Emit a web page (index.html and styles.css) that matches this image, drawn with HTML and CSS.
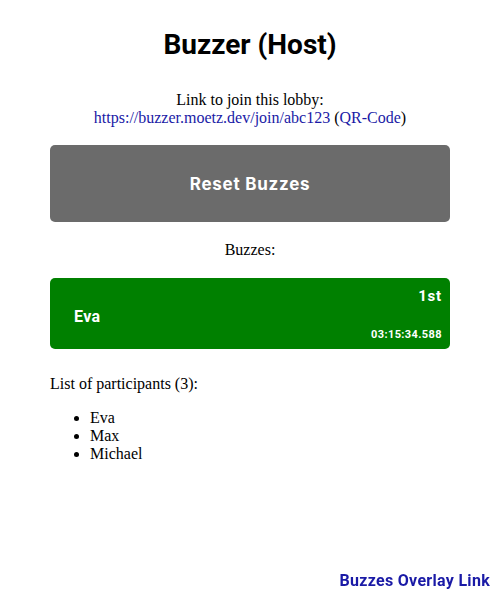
FILE: index.html
```html
<!DOCTYPE html>
<html>
<head>
<meta charset="utf-8">
<link rel="stylesheet" href="styles.css">
</head>
<body>
<div class="page">
  <h1 class="title">Buzzer (Host)</h1>
  <p class="join">Link to join this lobby:<br><a class="link" href="#">https://buzzer.moetz.dev/join/abc123</a> (<a class="link" href="#">QR-Code</a>)</p>
  <button class="reset">Reset Buzzes</button>
  <p class="label">Buzzes:</p>
  <div class="buzz">
    <span class="buzz-name">Eva</span>
    <div class="buzz-meta">
      <span class="buzz-rank">1st</span>
      <span class="buzz-time">03:15:34.588</span>
    </div>
  </div>
  <p class="participants">List of participants (3):</p>
  <ul class="plist">
    <li>Eva</li>
    <li>Max</li>
    <li>Michael</li>
  </ul>
</div>
<a class="overlay" href="#">Buzzes Overlay Link</a>
</body>
</html>
```
FILE: styles.css
```css
html, body {
  margin: 0;
  padding: 0;
}
body {
  font-family: "Liberation Serif", serif;
  font-size: 16px;
  color: #000;
  background: #fff;
}
.page {
  width: 400px;
  margin: 0 auto;
  padding-top: 29px;
}
.title {
  font-family: Roboto, sans-serif;
  font-weight: 700;
  font-size: 28px;
  line-height: 32px;
  text-align: center;
  margin: 0 0 30px;
}
.join {
  text-align: center;
  margin: 0 0 18px;
  line-height: 18px;
}
.link {
  color: #1a1aa6;
  text-decoration: none;
}
.reset {
  display: block;
  width: 400px;
  height: 77px;
  border: none;
  border-radius: 5px;
  background: #6b6b6b;
  color: #fff;
  font-family: Inter, sans-serif;
  font-weight: 700;
  font-size: 17px;
  letter-spacing: 0.75px;
  padding: 0;
  margin: 0;
}
.label {
  text-align: center;
  margin: 19px 0 19px;
  line-height: 18px;
}
.buzz {
  height: 71px;
  background: #008000;
  border-radius: 5px;
  color: #fff;
  font-family: Roboto, sans-serif;
  font-weight: 700;
  display: flex;
  justify-content: space-between;
  align-items: center;
  padding: 0 8px 0 24px;
  box-sizing: border-box;
}
.buzz-name {
  font-size: 16px;
  letter-spacing: 0.4px;
  padding-top: 5px;
}
.buzz-meta {
  display: flex;
  flex-direction: column;
  align-items: flex-end;
  justify-content: space-between;
  height: 100%;
  padding: 9px 0 8px;
  box-sizing: border-box;
}
.buzz-rank {
  font-size: 15px;
  letter-spacing: 0.8px;
}
.buzz-time {
  font-size: 11px;
  letter-spacing: 0.4px;
}
.participants {
  margin: 26px 0 16px;
  line-height: 18px;
}
.plist {
  margin: 0;
  padding-left: 40px;
  line-height: 18px;
}
.overlay {
  position: fixed;
  right: 10px;
  bottom: 10px;
  font-family: Roboto, sans-serif;
  font-weight: 700;
  font-size: 16px;
  letter-spacing: 0.3px;
  color: #1a1aa6;
  text-decoration: none;
}
```
